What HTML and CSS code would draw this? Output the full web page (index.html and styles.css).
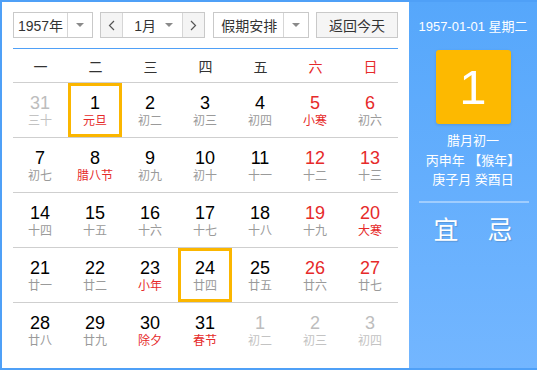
FILE: index.html
```html
<!DOCTYPE html>
<html lang="zh-CN">
  <head>
    <meta charset="UTF-8" />
    <meta name="viewport" content="width=device-width, initial-scale=1.0" />
    <title>万年历</title>
    <link rel="stylesheet" href="styles.css">
  </head>

  <body>
    <div class="calendar">
      <div class="cal-main">
        <div class="toolbar">
          <div class="select year-select">
            <span class="select-text">1957年</span>
            <span class="select-arrow"></span>
          </div>
          <div class="month-group">
            <span class="nav-btn">
              <svg width="7" height="11" viewBox="0 0 7 11"><polyline points="6,1 1.5,5.5 6,10" fill="none" stroke="#555" stroke-width="1.2" /></svg>
            </span>
            <span class="month-select">
              <span>1月</span>
              <span class="tri"></span>
            </span>
            <span class="nav-btn">
              <svg width="7" height="11" viewBox="0 0 7 11"><polyline points="1,1 5.5,5.5 1,10" fill="none" stroke="#555" stroke-width="1.2" /></svg>
            </span>
          </div>
          <div class="select holiday-select">
            <span class="select-text">假期安排</span>
            <span class="select-arrow"></span>
          </div>
          <button class="today-btn">返回今天</button>
        </div>

        <div class="week-head">
          <span>一</span><span>二</span><span>三</span><span>四</span><span>五</span>
          <span class="red">六</span><span class="red">日</span>
        </div>

        <div class="days">
          <div class="cell"><div class="day other"><b>31</b><i>三十</i></div></div>
          <div class="cell"><div class="day selected"><b>1</b><i class="fest">元旦</i></div></div>
          <div class="cell"><div class="day"><b>2</b><i>初二</i></div></div>
          <div class="cell"><div class="day"><b>3</b><i>初三</i></div></div>
          <div class="cell"><div class="day"><b>4</b><i>初四</i></div></div>
          <div class="cell"><div class="day weekend"><b>5</b><i class="fest">小寒</i></div></div>
          <div class="cell"><div class="day weekend"><b>6</b><i>初六</i></div></div>

          <div class="cell"><div class="day"><b>7</b><i>初七</i></div></div>
          <div class="cell"><div class="day"><b>8</b><i class="fest">腊八节</i></div></div>
          <div class="cell"><div class="day"><b>9</b><i>初九</i></div></div>
          <div class="cell"><div class="day"><b>10</b><i>初十</i></div></div>
          <div class="cell"><div class="day"><b>11</b><i>十一</i></div></div>
          <div class="cell"><div class="day weekend"><b>12</b><i>十二</i></div></div>
          <div class="cell"><div class="day weekend"><b>13</b><i>十三</i></div></div>

          <div class="cell"><div class="day"><b>14</b><i>十四</i></div></div>
          <div class="cell"><div class="day"><b>15</b><i>十五</i></div></div>
          <div class="cell"><div class="day"><b>16</b><i>十六</i></div></div>
          <div class="cell"><div class="day"><b>17</b><i>十七</i></div></div>
          <div class="cell"><div class="day"><b>18</b><i>十八</i></div></div>
          <div class="cell"><div class="day weekend"><b>19</b><i>十九</i></div></div>
          <div class="cell"><div class="day weekend"><b>20</b><i class="fest">大寒</i></div></div>

          <div class="cell"><div class="day"><b>21</b><i>廿一</i></div></div>
          <div class="cell"><div class="day"><b>22</b><i>廿二</i></div></div>
          <div class="cell"><div class="day"><b>23</b><i class="fest">小年</i></div></div>
          <div class="cell"><div class="day selected"><b>24</b><i>廿四</i></div></div>
          <div class="cell"><div class="day"><b>25</b><i>廿五</i></div></div>
          <div class="cell"><div class="day weekend"><b>26</b><i>廿六</i></div></div>
          <div class="cell"><div class="day weekend"><b>27</b><i>廿七</i></div></div>

          <div class="cell last"><div class="day"><b>28</b><i>廿八</i></div></div>
          <div class="cell last"><div class="day"><b>29</b><i>廿九</i></div></div>
          <div class="cell last"><div class="day"><b>30</b><i class="fest">除夕</i></div></div>
          <div class="cell last"><div class="day"><b>31</b><i class="fest">春节</i></div></div>
          <div class="cell last"><div class="day other"><b>1</b><i>初二</i></div></div>
          <div class="cell last"><div class="day other"><b>2</b><i>初三</i></div></div>
          <div class="cell last"><div class="day other"><b>3</b><i>初四</i></div></div>
        </div>
      </div>

      <div class="cal-side">
        <div class="side-date">1957-01-01 星期二</div>
        <div class="side-day">1</div>
        <div class="side-lunar">
          <p>腊月初一</p>
          <p>丙申年 【猴年】</p>
          <p>庚子月 癸酉日</p>
        </div>
        <div class="side-line"></div>
        <div class="side-yiji">
          <span>宜</span>
          <span>忌</span>
        </div>
      </div>
    </div>
  </body>
</html>
```

FILE: styles.css
```css
body {
  margin: 0;
  padding: 0;
  font-family: "Liberation Sans", "Noto Sans CJK SC", sans-serif;
  color: #333;
}

.calendar {
  display: flex;
  width: 535px;
  height: 366px;
  border: 2px solid #4fa0f7;
  border-right: none;
}

.cal-main {
  width: 385px;
  padding: 10px 11px 0 11px;
  background: #fff;
}

.toolbar {
  display: flex;
  justify-content: space-between;
  height: 26px;
  padding-bottom: 10px;
  border-bottom: 1px solid #4fa0f7;
}

.select {
  display: flex;
  box-sizing: border-box;
  height: 26px;
  border: 1px solid #c9c9c9;
  background: #fff;
  font-size: 14px;
}

.select-text {
  flex: 1;
  display: flex;
  align-items: center;
  justify-content: center;
}

.select-arrow {
  width: 24px;
  border-left: 1px solid #d6d6d6;
  display: flex;
  align-items: center;
  justify-content: center;
}

.select-arrow::after,
.month-select .tri {
  content: "";
  width: 0;
  height: 0;
  border-left: 4px solid transparent;
  border-right: 4px solid transparent;
  border-top: 4px solid #8a8a8a;
}

.year-select {
  width: 80px;
}

.holiday-select {
  width: 96px;
}

.holiday-select .select-text {
  padding-left: 2px;
}

.month-group {
  display: flex;
  box-sizing: border-box;
  width: 105px;
  height: 26px;
  border: 1px solid #c9c9c9;
}

.nav-btn {
  width: 21px;
  background: #f4f4f4;
  display: flex;
  align-items: center;
  justify-content: center;
}

.month-select {
  flex: 1;
  display: flex;
  align-items: center;
  justify-content: space-between;
  padding: 0 9px 0 11px;
  border-left: 1px solid #d6d6d6;
  border-right: 1px solid #d6d6d6;
  background: #fff;
  font-size: 14px;
}

.today-btn {
  width: 82px;
  height: 26px;
  padding: 0;
  border: 1px solid #c9c9c9;
  background: #f5f5f5;
  color: #333;
  font-family: inherit;
  font-size: 14px;
}

.week-head {
  display: grid;
  grid-template-columns: repeat(7, 55px);
  height: 33px;
  border-bottom: 1px solid #cfcfcf;
  font-size: 14px;
}

.week-head span {
  display: flex;
  align-items: center;
  justify-content: center;
}

.red {
  color: #e62a2a;
}

.days {
  display: grid;
  grid-template-columns: repeat(7, 55px);
}

.cell {
  height: 54px;
  border-bottom: 1px solid #cfcfcf;
}

.cell.last {
  border-bottom: none;
}

.day {
  box-sizing: border-box;
  width: 54px;
  height: 54px;
  padding-top: 7px;
  border: 3px solid transparent;
  text-align: center;
}

.day.selected {
  border-color: #fbb600;
}

.day b {
  display: block;
  height: 20px;
  line-height: 20px;
  font-size: 18px;
  font-weight: normal;
  color: #000;
}

.day i {
  display: block;
  height: 17px;
  line-height: 17px;
  font-size: 12px;
  font-style: normal;
  color: #9a9a9a;
}

.day.weekend b {
  color: #e62a2a;
}

.day i.fest {
  color: #e62a2a;
}

.day.other b {
  color: #bdbdbd;
}

.day.other i {
  color: #c3c3c3;
}

.cal-side {
  flex: 1;
  background: linear-gradient(#56a7fb, #73b6ff);
  color: #fff;
  text-align: center;
}

.side-date {
  margin-top: 16px;
  height: 18px;
  line-height: 18px;
  font-size: 13px;
}

.side-day {
  width: 75px;
  height: 74px;
  margin: 14px auto 0 auto;
  border-radius: 3px;
  background: #fdb900;
  box-shadow: 0 1px 3px rgba(0, 0, 0, 0.12);
  line-height: 74px;
  font-size: 49px;
}

.side-lunar {
  margin-top: 7px;
  font-size: 13px;
}

.side-lunar p {
  margin: 0;
  height: 19.5px;
  line-height: 19.5px;
}

.side-line {
  height: 2px;
  margin: 11px 8px 0 10px;
  background: rgba(255, 255, 255, 0.38);
}

.side-yiji {
  display: flex;
  justify-content: space-around;
  padding: 0 10px;
  margin-top: 12px;
  font-size: 25px;
  line-height: 30px;
  text-shadow: 1px 1px 1px rgba(0, 0, 0, 0.15);
}
```
